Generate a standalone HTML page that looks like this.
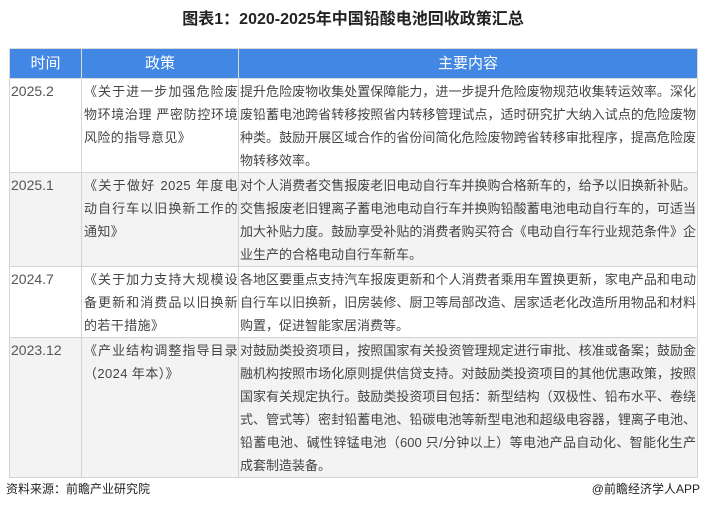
<!DOCTYPE html>
<html><head><meta charset="utf-8"><style>
body{margin:0;width:706px;height:518px;background:#fff;font-family:"Liberation Sans","Noto Sans CJK SC",sans-serif;position:relative;overflow:hidden}
.title{position:absolute;top:8px;left:0;width:706px;text-align:center;font-family:"Liberation Sans","Noto Sans CJK SC",sans-serif;font-weight:bold;font-size:16px;color:#222;line-height:24px}
table{position:absolute;left:9px;top:48px;border-collapse:collapse;width:689px;table-layout:fixed}
td,th{border:1px solid #d4d4d4;vertical-align:top;font-size:13px;color:#444;line-height:23px;padding:1px 1px 0 1px;text-align:justify}
td.t{font-size:14px;color:#555}
th{background:#4287e3;color:#fff;font-weight:normal;font-size:15px;height:29px;padding:0;vertical-align:middle;text-align:center;border-color:#dcdcdc}
tr.g td{background:#f3f3f3}
td.p{padding:1px 0 0 2px;letter-spacing:.4px}
.foot{position:absolute;top:480px;font-size:12px;color:#222;line-height:18px}
</style></head><body>
<div class="title">图表1：2020-2025年中国铅酸电池回收政策汇总</div>
<table>
<colgroup><col style="width:72px"><col style="width:157px"><col></colgroup>
<tr><th>时间</th><th>政策</th><th>主要内容</th></tr>
<tr style="height:93px"><td class="t">2025.2</td><td class="p">《关于进一步加强危险废物环境治理 严密防控环境风险的指导意见》</td><td>提升危险废物收集处置保障能力，进一步提升危险废物规范收集转运效率。深化废铅蓄电池跨省转移按照省内转移管理试点，适时研究扩大纳入试点的危险废物种类。鼓励开展区域合作的省份间简化危险废物跨省转移审批程序，提高危险废物转移效率。</td></tr>
<tr class="g" style="height:92px"><td class="t">2025.1</td><td class="p">《关于做好 2025 年度电动自行车以旧换新工作的通知》</td><td>对个人消费者交售报废老旧电动自行车并换购合格新车的，给予以旧换新补贴。交售报废老旧锂离子蓄电池电动自行车并换购铅酸蓄电池电动自行车的，可适当加大补贴力度。鼓励享受补贴的消费者购买符合《电动自行车行业规范条件》企业生产的合格电动自行车新车。</td></tr>
<tr style="height:67px"><td class="t">2024.7</td><td class="p">《关于加力支持大规模设备更新和消费品以旧换新的若干措施》</td><td>各地区要重点支持汽车报废更新和个人消费者乘用车置换更新，家电产品和电动自行车以旧换新，旧房装修、厨卫等局部改造、居家适老化改造所用物品和材料购置，促进智能家居消费等。</td></tr>
<tr class="g" style="height:139px"><td class="t">2023.12</td><td class="p">《产业结构调整指导目录（2024 年本）》</td><td>对鼓励类投资项目，按照国家有关投资管理规定进行审批、核准或备案；鼓励金融机构按照市场化原则提供信贷支持。对鼓励类投资项目的其他优惠政策，按照国家有关规定执行。鼓励类投资项目包括：新型结构（双极性、铅布水平、卷绕式、管式等）密封铅蓄电池、铅碳电池等新型电池和超级电容器，锂离子电池、铅蓄电池、碱性锌锰电池（600 只/分钟以上）等电池产品自动化、智能化生产成套制造装备。</td></tr>
</table>
<div class="foot" style="left:6px">资料来源：前瞻产业研究院</div>
<div class="foot" style="right:6px">@前瞻经济学人APP</div>
</body></html>
